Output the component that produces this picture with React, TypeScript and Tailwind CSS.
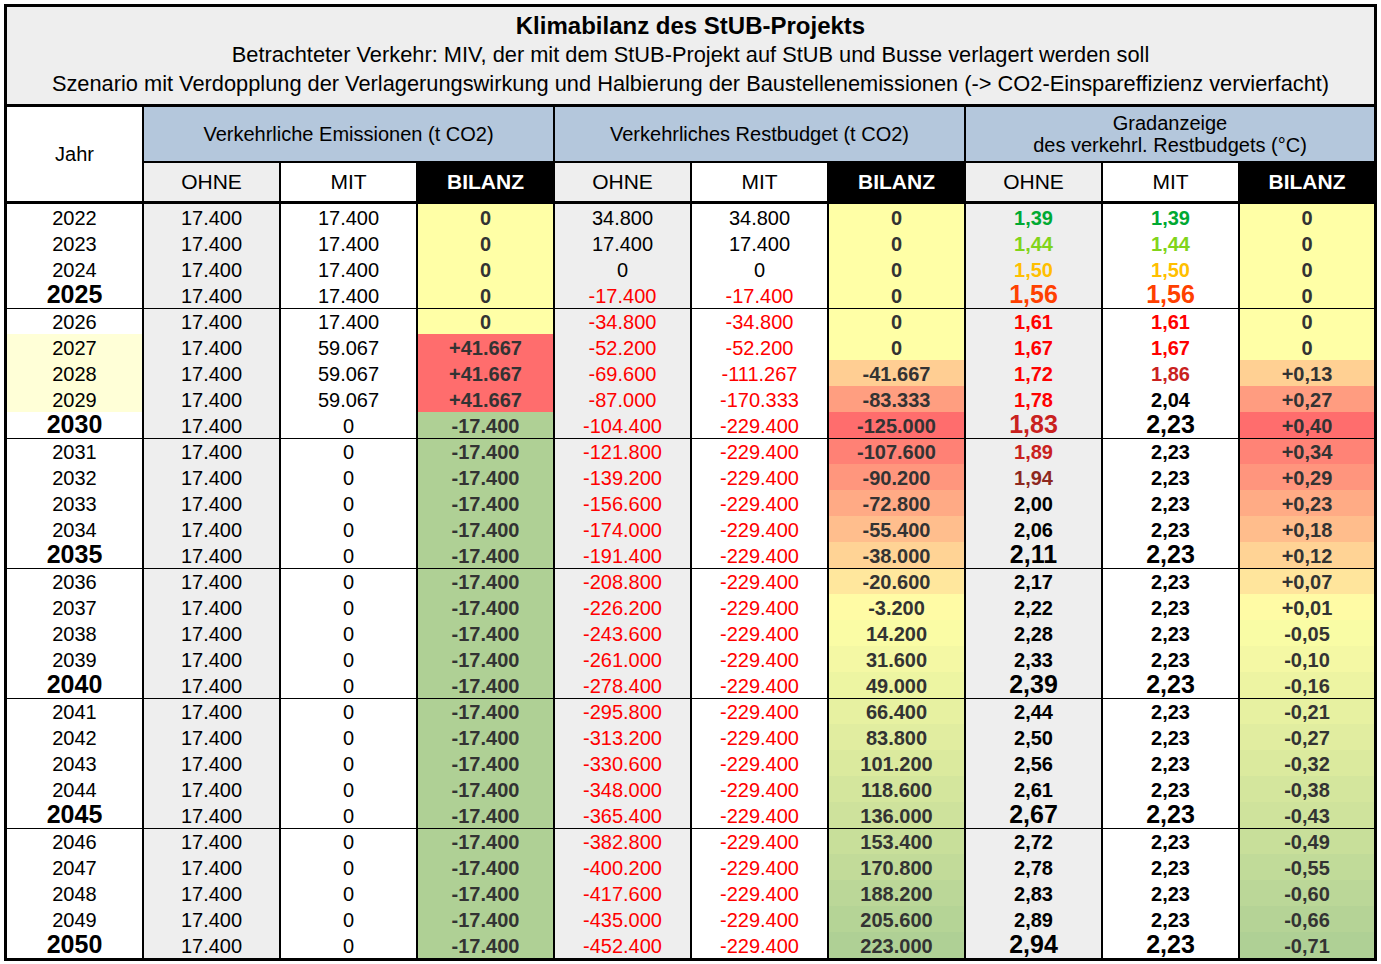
const years = Array.from({ length: 29 }, (_, i) => 2022 + i);

const emMit = years.map((y) => (y <= 2026 ? "17.400" : y <= 2029 ? "59.067" : "0"));
const emBil = years.map((y) => (y <= 2026 ? "0" : y <= 2029 ? "+41.667" : "-17.400"));

const restOhne = years.map((_, i) => 34800 - 17400 * i);
const restMitNum = [34800, 17400, 0, -17400, -34800, -52200, -111267, -170333];
const restMit = years.map((_, i) => (i < restMitNum.length ? restMitNum[i] : -229400));
const restBil = years.map((_, i) => restMit[i] - restOhne[i]);

const gradOhne = [
  "1,39", "1,44", "1,50", "1,56", "1,61", "1,67", "1,72", "1,78", "1,83", "1,89",
  "1,94", "2,00", "2,06", "2,11", "2,17", "2,22", "2,28", "2,33", "2,39", "2,44",
  "2,50", "2,56", "2,61", "2,67", "2,72", "2,78", "2,83", "2,89", "2,94",
];
const gradMit = years.map((_, i) =>
  i < 9 ? ["1,39", "1,44", "1,50", "1,56", "1,61", "1,67", "1,86", "2,04", "2,23"][i] : "2,23"
);
const gradBil = [
  "0", "0", "0", "0", "0", "0", "+0,13", "+0,27", "+0,40", "+0,34", "+0,29", "+0,23",
  "+0,18", "+0,12", "+0,07", "+0,01", "-0,05", "-0,10", "-0,16", "-0,21", "-0,27",
  "-0,32", "-0,38", "-0,43", "-0,49", "-0,55", "-0,60", "-0,66", "-0,71",
];

function fmt(n: number) {
  const s = Math.abs(n).toString().replace(/\B(?=(\d{3})+(?!\d))/g, ".");
  return n < 0 ? "-" + s : s;
}

// 3-colour scale: red (worst) - yellow (0) - green (best)
function scaleColor(bad: number) {
  const yel = [255, 255, 166];
  const red = [255, 109, 109];
  const grn = [175, 208, 149];
  const to = bad > 0 ? red : grn;
  const t = Math.min(Math.abs(bad), 1);
  const c = yel.map((a, i) => Math.round(a + (to[i] - a) * t));
  return `rgb(${c.join(",")})`;
}

function gradColor(s: string) {
  const v = parseFloat(s.replace(",", "."));
  if (v < 1.4) return "text-[#00a933]";
  if (v < 1.45) return "text-[#81d41a]";
  if (v < 1.55) return "text-[#ffbf00]";
  if (v < 1.6) return "text-[#ff4000]";
  if (v < 1.8) return "text-[#ff0000]";
  if (v < 1.9) return "text-[#c9211e]";
  if (v < 2.0) return "text-[#8d281e]";
  return "text-black";
}

function Cell({
  children,
  className = "",
  last = false,
  style,
}: {
  children: React.ReactNode;
  className?: string;
  last?: boolean;
  style?: React.CSSProperties;
}) {
  return (
    <div
      style={style}
      className={`${last ? "w-[134px]" : "w-[137px] border-r-2 border-black"} flex items-end justify-center ${className}`}
    >
      {children}
    </div>
  );
}

function Group({ title, last = false }: { title: React.ReactNode; last?: boolean }) {
  return (
    <div className={`${last ? "w-[408px]" : "w-[411px] border-r-2 border-black"} flex flex-col`}>
      <div className="h-[56px] bg-[#b4c7dc] border-b-2 border-black flex items-center justify-center text-center text-[20px] leading-[22px]">
        {title}
      </div>
      <div className="h-[38px] flex text-[21px]">
        <div className="w-[137px] border-r-2 border-black bg-[#eeeeee] flex items-center justify-center">OHNE</div>
        <div className="w-[137px] border-r-2 border-black bg-white flex items-center justify-center">MIT</div>
        <div className={`${last ? "w-[134px]" : "w-[135px]"} bg-black text-white font-bold flex items-center justify-center`}>
          BILANZ
        </div>
      </div>
    </div>
  );
}

export default function App() {
  return (
    <div className="min-h-screen bg-white pt-[4px] pl-[4px] text-black font-['Liberation_Sans',Arial,sans-serif]">
      <div className="w-[1373px] border-[3px] border-black">
        <div className="h-[100px] bg-[#eeeeee] border-b-[3px] border-black flex flex-col items-center pt-[4px] text-[21.8px] leading-[29px]">
          <div className="font-bold text-[24px]">Klimabilanz des StUB-Projekts</div>
          <div>Betrachteter Verkehr: MIV, der mit dem StUB-Projekt auf StUB und Busse verlagert werden soll</div>
          <div>
            Szenario mit Verdopplung der Verlagerungswirkung und Halbierung der Baustellenemissionen (-&gt; CO2-Einspareffizienz vervierfacht)
          </div>
        </div>

        <div className="flex border-b-[3px] border-black">
          <div className="w-[137px] h-[94px] border-r-2 border-black bg-white flex items-center justify-center text-[20px]">
            Jahr
          </div>
          <Group title="Verkehrliche Emissionen (t CO2)" />
          <Group title="Verkehrliches Restbudget (t CO2)" />
          <Group
            last
            title={
              <span>
                Gradanzeige
                <br />
                des verkehrl. Restbudgets (°C)
              </span>
            }
          />
        </div>

        <div className="flex flex-col text-[20px]">
          {years.map((y, i) => {
            const big = y % 5 === 0;
            const sep = y % 5 === 1 && y > 2022;
            const neg = (n: number) => (n < 0 ? "text-[#ff0000]" : "text-black");
            const gb = parseFloat(gradBil[i].replace(",", "."));
            return (
              <div key={y} className={`flex h-[26px] ${sep ? "border-t border-black" : ""}`}>
                <Cell className={y >= 2027 && y <= 2029 ? "bg-[#ffffd7]" : "bg-white"}>
                  <span className={big ? "font-bold text-[25px] leading-[27px]" : "leading-[24px]"}>{y}</span>
                </Cell>
                <Cell className="bg-[#eeeeee]">
                  <span className="leading-[24px]">17.400</span>
                </Cell>
                <Cell className="bg-white">
                  <span className="leading-[24px]">{emMit[i]}</span>
                </Cell>
                <Cell
                  className={
                    y <= 2026 ? "bg-[#ffffa6]" : y <= 2029 ? "bg-[#ff6d6d]" : "bg-[#afd095]"
                  }
                >
                  <span className="leading-[24px] font-bold text-[#333333]">{emBil[i]}</span>
                </Cell>
                <Cell className="bg-[#eeeeee]">
                  <span className={`leading-[24px] ${neg(restOhne[i])}`}>{fmt(restOhne[i])}</span>
                </Cell>
                <Cell className="bg-white">
                  <span className={`leading-[24px] ${neg(restMit[i])}`}>{fmt(restMit[i])}</span>
                </Cell>
                <Cell style={{ backgroundColor: scaleColor(restBil[i] < 0 ? -restBil[i] / 125000 : -restBil[i] / 223000) }}>
                  <span className="leading-[24px] font-bold text-[#333333]">{fmt(restBil[i])}</span>
                </Cell>
                <Cell className="bg-[#eeeeee]">
                  <span
                    className={`font-bold ${gradColor(gradOhne[i])} ${big ? "text-[25px] leading-[27px]" : "leading-[24px]"}`}
                  >
                    {gradOhne[i]}
                  </span>
                </Cell>
                <Cell className="bg-white">
                  <span
                    className={`font-bold ${gradColor(gradMit[i])} ${big ? "text-[25px] leading-[27px]" : "leading-[24px]"}`}
                  >
                    {gradMit[i]}
                  </span>
                </Cell>
                <Cell last style={{ backgroundColor: scaleColor(gb > 0 ? gb / 0.4 : gb / 0.71) }}>
                  <span className="leading-[24px] font-bold text-[#333333]">{gradBil[i]}</span>
                </Cell>
              </div>
            );
          })}
        </div>
      </div>
    </div>
  );
}
